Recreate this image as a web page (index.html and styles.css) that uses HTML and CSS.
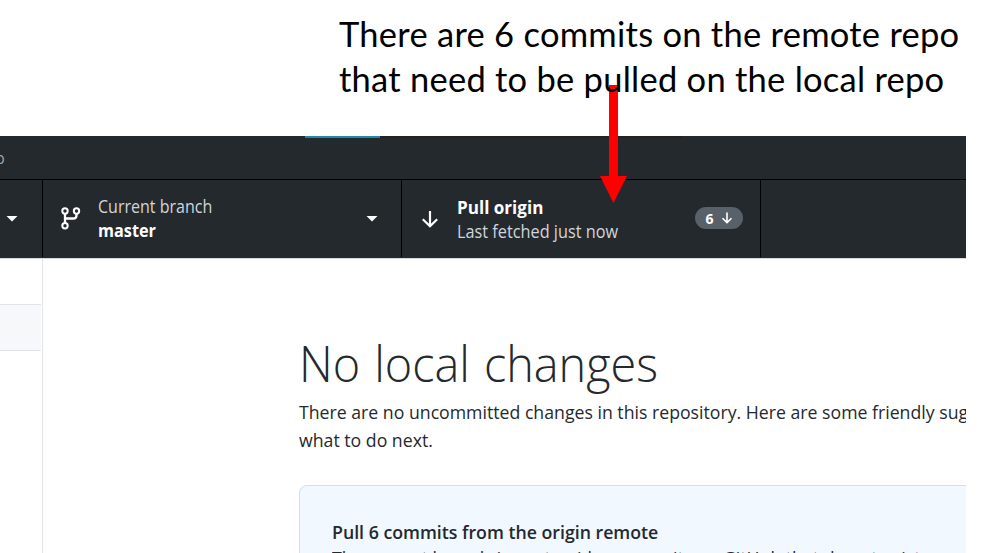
FILE: index.html
```html
<!DOCTYPE html>
<html lang="en">
<head>
<meta charset="utf-8">
<title>No local changes</title>
<link rel="stylesheet" href="styles.css">
</head>
<body>
<div class="slide">
  <div class="note"><div><span class="n1">There are 6 commits on the remote repo</span></div><div><span class="n2">that need to be pulled on the local repo</span></div></div>
  <svg class="pointer" width="28" height="118" viewBox="0 0 28 118"><path d="M9 0h9v91h9L13.500 118 0 91h9z" fill="#f00"/></svg>
  <div class="app">
    <div class="titlebar"><span class="menu">p</span><span class="progress"></span><span class="shade"></span></div>
    <div class="toolbar">
      <div class="tool repo"><span class="caret"></span></div>
      <div class="tool branch">
        <svg class="icon-branch" width="20" height="24" viewBox="0 0 20 24" fill="none" stroke="#fff"><g stroke-width="2"><circle cx="4" cy="4" r="2.700"/><circle cx="15.500" cy="4" r="2.700"/><circle cx="4" cy="18.700" r="2.700"/></g><path d="M4 6.500v10M4 11.500h8.500q3 0 3-3v-2" stroke-width="2.300"/></svg>
        <div class="labels"><div class="sub"><span class="fit t1">Current branch</span></div><div class="main"><span class="fit t2">master</span></div></div>
        <span class="caret"></span>
      </div>
      <div class="tool pull">
        <svg class="icon-down" width="18" height="19" viewBox="0 0 18 19" fill="none" stroke="#fff" stroke-width="2.200"><path d="M9 1v15M1.800 9.200 9 16.300l7.200-7.100"/></svg>
        <div class="labels"><div class="main"><span class="fit t3">Pull origin</span></div><div class="sub"><span class="fit t4">Last fetched just now</span></div></div>
        <div class="badge"><span>6</span><svg width="12" height="12" viewBox="0 0 12 12" fill="none" stroke="#fff" stroke-width="1.600"><path d="M6 0.500v10M1.500 6.200 6 10.600l4.500-4.400"/></svg></div>
      </div>
    </div>
    <div class="content">
      <div class="sidebar"><div class="row"></div></div>
      <main>
        <h1><span class="fit t5">No local changes</span></h1>
        <p class="intro"><span class="fit t6">There are no uncommitted changes in this repository. Here are some friendly sug</span><br><span class="fit t6">what to do next.</span></p>
        <section class="card"><h2><span class="fit t8">Pull 6 commits from the origin remote</span></h2><p><span class="fit t9">The current branch (<span class="ref">master</span>) has commits on GitHub that do not exist on your machine.</span></p></section>
      </main>
    </div>
  </div>
</div>
</body>
</html>
```
FILE: styles.css
```css
* { box-sizing: border-box; }
body { margin: 0; background: #fff; font-family: "Open Sans", "Noto Sans", sans-serif; color: #24292e; }
.slide { position: relative; width: 991px; height: 553px; overflow: hidden; }
.note { position: relative; z-index: 3; height: 136px; padding: 11px 0 0 339px; font-family: Lato, sans-serif; font-size: 34.5px; line-height: 45px; color: #000; white-space: nowrap; }
.n1 { letter-spacing: 0.26px; }
.n2 { letter-spacing: 0.25px; }
.pointer { position: absolute; left: 600px; top: 85px; z-index: 2; }
.fit { display: inline-block; transform-origin: 0 50%; }
.t1 { transform: scaleX(0.916); }
.t2 { transform: scaleX(0.93); }
.t3 { transform: scaleX(0.975); }
.t4 { transform: scaleX(0.93); }
.t5 { transform: scaleX(0.955); word-spacing: 2px; }
.t6 { transform: scaleX(0.956); }
.t8 { transform: scaleX(0.958); }
.t9 { transform: scaleX(0.956); }
.ref { padding: 0 10px; }
.app { width: 966px; height: 417px; overflow: hidden; }
.titlebar { display: flex; align-items: flex-start; height: 43px; background: #24292e; color: #9da1a4; font-size: 14px; }
.menu { width: 305px; margin-left: -5px; padding-top: 12px; font-size: 16px; line-height: 20px; }
.progress { width: 75px; height: 2px; margin-left: 5px; background: #2188a8; }
.shade { width: 302px; height: 2px; background: #24211f; }
.toolbar { display: flex; height: 80px; border-top: 1px solid #000; background: #24292e; border-bottom: 1px solid #d8dbde; }
.tool { display: flex; align-items: center; height: 77px; border-right: 1px solid #000; color: #fff; white-space: nowrap; }
.repo { width: 43px; padding-left: 6px; }
.branch, .pull { width: 359px; padding-left: 18px; }
.caret { width: 12px; height: 6px; background: #fff; clip-path: polygon(0 0, 100% 0, 50% 100%); }
.branch .caret { margin-left: auto; margin-right: 23px; }
.icon-branch { margin-right: 17px; }
.icon-down { margin: 2px 18px 0 1px; }
.labels { padding-bottom: 1px; line-height: 24px; font-size: 17.5px; }
.pull .labels { padding-top: 2px; }
.sub { color: #d1d5da; }
.main { font-weight: 700; }
.badge { display: flex; align-items: center; justify-content: center; gap: 7px; width: 48px; height: 22px; margin: 0 17px 1px auto; border-radius: 11px; background: #586069; font-size: 14px; font-weight: 700; }
.content { display: flex; height: 294px; }
.sidebar { width: 43px; padding-top: 45px; border-right: 1px solid #e1e4e8; }
.row { width: 41px; height: 47px; background: #f6f8fa; border: solid #e1e4e8; border-width: 1px 0; }
main { width: 923px; padding: 70px 0 0 256px; white-space: nowrap; }
h1, h2, p { margin: 0; }
h1 { font-size: 49px; font-weight: 300; line-height: 68px; }
.intro { margin-top: 1px; font-size: 18.5px; line-height: 28px; }
.card { width: 760px; height: 200px; margin-top: 31px; padding: 33px 32px; border: 1px solid #c8e1ff; border-radius: 8px; background: #f1f8ff; }
h2 { font-size: 18.5px; line-height: 26px; font-weight: 600; }
.card p { margin-top: -1px; font-size: 18.5px; line-height: 28px; }
```
